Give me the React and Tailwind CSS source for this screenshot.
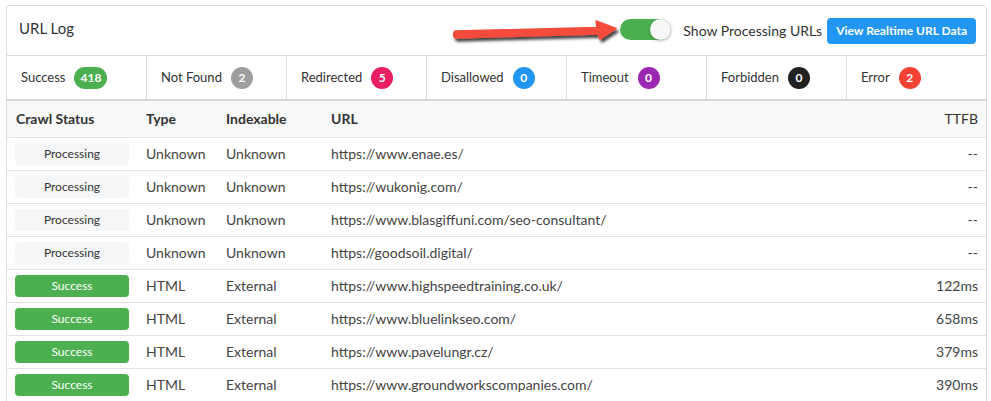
const stats = [
  { label: "Success", count: "418", color: "bg-[#4caf50]" },
  { label: "Not Found", count: "2", color: "bg-[#9e9e9e]" },
  { label: "Redirected", count: "5", color: "bg-[#e91e63]" },
  { label: "Disallowed", count: "0", color: "bg-[#2196f3]" },
  { label: "Timeout", count: "0", color: "bg-[#9c27b0]" },
  { label: "Forbidden", count: "0", color: "bg-[#212121]" },
  { label: "Error", count: "2", color: "bg-[#f44336]" },
];

const rows = [
  { status: "Processing", type: "Unknown", idx: "Unknown", url: "https://www.enae.es/", ttfb: "--" },
  { status: "Processing", type: "Unknown", idx: "Unknown", url: "https://wukonig.com/", ttfb: "--" },
  { status: "Processing", type: "Unknown", idx: "Unknown", url: "https://www.blasgiffuni.com/seo-consultant/", ttfb: "--" },
  { status: "Processing", type: "Unknown", idx: "Unknown", url: "https://goodsoil.digital/", ttfb: "--" },
  { status: "Success", type: "HTML", idx: "External", url: "https://www.highspeedtraining.co.uk/", ttfb: "122ms" },
  { status: "Success", type: "HTML", idx: "External", url: "https://www.bluelinkseo.com/", ttfb: "658ms" },
  { status: "Success", type: "HTML", idx: "External", url: "https://www.pavelungr.cz/", ttfb: "379ms" },
  { status: "Success", type: "HTML", idx: "External", url: "https://www.groundworkscompanies.com/", ttfb: "390ms" },
];

function StatusBadge({ status }) {
  if (status === "Success") {
    return (
      <div className="w-[114px] h-[22px] rounded-[4px] bg-[#4caf50] text-white text-[12px] flex items-center justify-center">
        Success
      </div>
    );
  }
  return (
    <div className="w-[114px] h-[22px] rounded-[4px] bg-[#f5f6f8] text-[#333] text-[12px] flex items-center justify-center">
      {status}
    </div>
  );
}

export default function App() {
  return (
    <div
      className="relative w-[991px] h-[401px] overflow-hidden bg-white pl-[6px] pt-[5px]"
      style={{ fontFamily: "Lato, 'Open Sans', sans-serif" }}
    >
      {/* red arrow overlay */}
      <svg
        className="absolute left-0 top-0 pointer-events-none z-10"
        width="991"
        height="60"
      >
        <defs>
          <filter id="shadow" x="-10%" y="-50%" width="120%" height="200%">
            <feDropShadow dx="2" dy="3" stdDeviation="1.6" floodColor="#000" floodOpacity="0.75" />
          </filter>
        </defs>
        <path
          d="M455,31 L597,27.5 L596,21 L616,28.5 L600,39 L598,34 L455,38 Q452,34.5 455,31 Z"
          fill="#f44c3c"
          stroke="#f44c3c"
          strokeWidth="1.5"
          strokeLinejoin="round"
          filter="url(#shadow)"
        />
      </svg>

      <div className="w-[981px] border border-[#dcdcdc] rounded-t-[3px] text-[#333]">
        {/* HEADER */}
        <div className="h-[49px] flex items-center justify-between pl-[12px] pr-[10px]">
          <div className="text-[15px] text-[#333] -mt-[5px]">URL Log</div>
          <div className="flex items-center">
            <div className="w-[51px] h-[21px] rounded-full bg-[#4caf50] relative -mt-[2px]">
              <span className="absolute right-0 top-0 w-[21px] h-[21px] rounded-full bg-[#f7f7f7] shadow-[0_1px_3px_rgba(0,0,0,0.3)]" />
            </div>
            <span className="ml-[12px] text-[14px] text-[#333]">Show Processing URLs</span>
            <button className="ml-[5px] h-[26px] px-[9px] rounded-[4px] bg-[#2196f3] text-white text-[12px] font-bold">
              View Realtime URL Data
            </button>
          </div>
        </div>

        {/* STATS */}
        <div className="grid grid-cols-[repeat(7,140px)] border-t border-[#dcdcdc] border-b-2 border-b-[#d8d8d8]">
          {stats.map((s, i) => (
            <div
              key={s.label}
              className={`h-[43px] flex items-center gap-[9px] px-[14px] text-[13px] text-[#333] ${
                i < 6 ? "border-r border-[#dcdcdc]" : ""
              }`}
            >
              <span>{s.label}</span>
              <span
                className={`${s.color} h-[22px] min-w-[22px] px-[6px] rounded-full text-white text-[12px] font-bold flex items-center justify-center`}
              >
                {s.count}
              </span>
            </div>
          ))}
        </div>

        {/* TABLE */}
        <table className="w-full border-collapse text-[14px]">
          <colgroup>
            <col className="w-[130px]" />
            <col className="w-[80px]" />
            <col className="w-[105px]" />
            <col />
            <col className="w-[100px]" />
          </colgroup>
          <thead>
            <tr className="bg-[#f8f9fa] h-[36px]">
              <th className="text-left font-bold pl-[9px] text-[#333]">Crawl Status</th>
              <th className="text-left font-bold pl-[9px] text-[#333]">Type</th>
              <th className="text-left font-bold pl-[9px] text-[#333]">Indexable</th>
              <th className="text-left font-bold pl-[9px] text-[#333]">URL</th>
              <th className="text-right font-normal pr-[8px] text-[#333]">TTFB</th>
            </tr>
          </thead>
          <tbody>
            {rows.map((r, i) => (
              <tr key={i} className="h-[33px] border-t border-[#e3e3e3] text-[#444]">
                <td className="pl-[8px]">
                  <StatusBadge status={r.status} />
                </td>
                <td className="pl-[9px]">{r.type}</td>
                <td className="pl-[9px]">{r.idx}</td>
                <td className="pl-[9px]">{r.url}</td>
                <td className="text-right pr-[8px]">{r.ttfb}</td>
              </tr>
            ))}
          </tbody>
        </table>
      </div>
    </div>
  );
}
